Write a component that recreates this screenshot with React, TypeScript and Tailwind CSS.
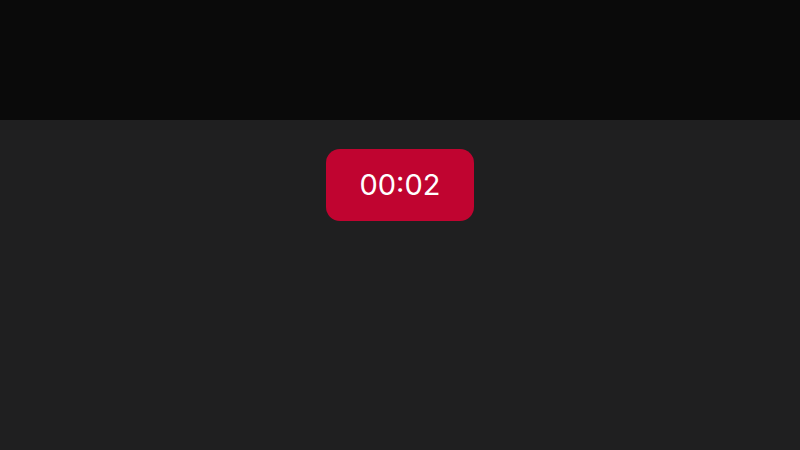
export default function App() {
  return (
    <div className="w-[800px] h-[450px] flex flex-col bg-[#1f1f20]" style={{ fontFamily: "Inter, 'Noto Sans', sans-serif" }}>
      <div className="h-[120px] bg-[#0a0a0a]" />
      <div className="flex justify-center pt-[29px]">
        <div className="w-[148px] h-[72px] rounded-[14px] bg-[#c00430] flex items-center justify-center text-white text-[29px] font-normal leading-none pb-[1px]">
          00:02
        </div>
      </div>
    </div>
  );
}
